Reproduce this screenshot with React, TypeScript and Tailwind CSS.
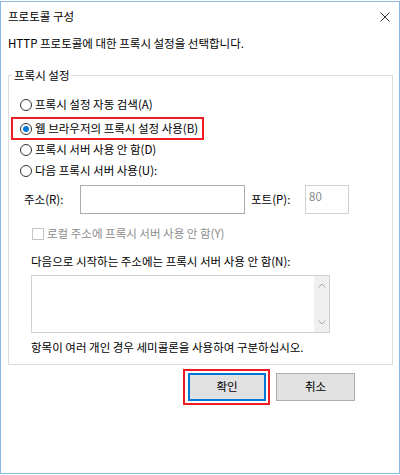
import React from 'react';

function Radio({ checked }: { checked?: boolean }) {
  return (
    <span className="flex h-[12px] w-[12px] shrink-0 items-center justify-center rounded-full border border-[#333333] bg-white">
      {checked && <span className="h-[6px] w-[6px] rounded-full bg-[#0078d7]" />}
    </span>
  );
}

function Chevron({ up }: { up?: boolean }) {
  return (
    <svg width="8" height="5" viewBox="0 0 8 5">
      <polyline
        points={up ? '0.5,4.5 4,1 7.5,4.5' : '0.5,0.5 4,4 7.5,0.5'}
        fill="none"
        stroke="#a6a6a6"
        strokeWidth="1"
      />
    </svg>
  );
}

export default function App() {
  return (
    <div className="h-[475px] w-[400px] bg-white pt-px font-['Noto_Sans_CJK_KR','Noto_Sans',sans-serif] text-[11.5px] text-black">
      <div className="h-[473px] w-[400px] border border-[#8bb9e6]">
        {/* 제목 표시줄 */}
        <div className="flex h-[29px] items-center justify-between pl-[7px] pr-[9px]">
          <span>프로토콜 구성</span>
          <svg width="10" height="10" viewBox="0 0 10 10">
            <path d="M0.5 0.5 L9.5 9.5 M9.5 0.5 L0.5 9.5" stroke="#333" strokeWidth="1" />
          </svg>
        </div>

        <div className="mt-[2px] h-[20px] pl-[7px] leading-[20px]">
          HTTP 프로토콜에 대한 프록시 설정을 선택합니다.
        </div>

        {/* 그룹 상자 */}
        <div className="relative ml-[7px] mt-[22px] w-[385px] border border-[#dcdcdc] pb-[7px] pt-[18px]">
          <span className="absolute left-[3px] top-[-9px] bg-white px-[2px] leading-[16px]">
            프록시 설정
          </span>

          <div className="flex h-[21px] items-center gap-[3px] pl-[11px]">
            <Radio />
            <span>프록시 설정 자동 검색(A)</span>
          </div>

          <div className="ml-[2px] mt-[2px] flex h-[23px] w-[193px] items-center gap-[3px] whitespace-nowrap border-2 border-[#ee1c25] pl-[7px]">
            <Radio checked />
            <span>웹 브라우저의 프록시 설정 사용(B)</span>
          </div>

          <div className="flex h-[20px] items-center gap-[3px] pl-[11px]">
            <Radio />
            <span>프록시 서버 사용 안 함(D)</span>
          </div>

          <div className="flex h-[21px] items-center gap-[3px] pl-[11px]">
            <Radio />
            <span>다음 프록시 서버 사용(U):</span>
          </div>

          <div className="mt-[4px] flex h-[29px] items-center pl-[15px]">
            <span className="w-[56px]">주소(R):</span>
            <div className="h-[29px] w-[165px] border border-[#acacac] bg-white" />
            <span className="ml-[6px] w-[54px]">포트(P):</span>
            <div className="h-[29px] w-[44px] border border-[#d0d0d0] bg-white pl-[3px] pt-[3px] leading-[14px] text-[#8a8a8a]">
              80
            </div>
          </div>

          <div className="mt-[9px] flex h-[21px] items-center gap-[3px] pl-[23px] text-[#8d8d8d]">
            <span className="h-[12px] w-[12px] border border-[#c4c4c4] bg-white" />
            <span>로컬 주소에 프록시 서버 사용 안 함(Y)</span>
          </div>

          <div className="mt-[7px] h-[20px] pl-[22px] leading-[20px]">
            다음으로 시작하는 주소에는 프록시 서버 사용 안 함(N):
          </div>

          <div className="ml-[22px] mt-[4px] flex h-[58px] w-[299px] border border-[#d0d0d0] bg-white">
            <div className="flex-1" />
            <div className="flex w-[15px] flex-col items-center justify-between bg-[#f0f0f0] py-[7px]">
              <Chevron up />
              <Chevron />
            </div>
          </div>

          <div className="mt-[4px] h-[20px] pl-[22px] leading-[20px]">
            항목이 여러 개인 경우 세미콜론을 사용하여 구분하십시오.
          </div>
        </div>

        {/* 버튼 */}
        <div className="mt-[4px] flex items-start pl-[182px]">
          <div className="border-2 border-[#ee1c25] pb-[2px] pl-[3px] pr-[2px] pt-[2px]">
            <button className="flex h-[28px] w-[78px] items-center justify-center border-2 border-[#0078d7] bg-[#e1e1e1]">
              확인
            </button>
          </div>
          <button className="ml-[6px] mt-[4px] flex h-[28px] w-[79px] items-center justify-center border border-[#adadad] bg-[#e1e1e1]">
            취소
          </button>
        </div>
      </div>
    </div>
  );
}
